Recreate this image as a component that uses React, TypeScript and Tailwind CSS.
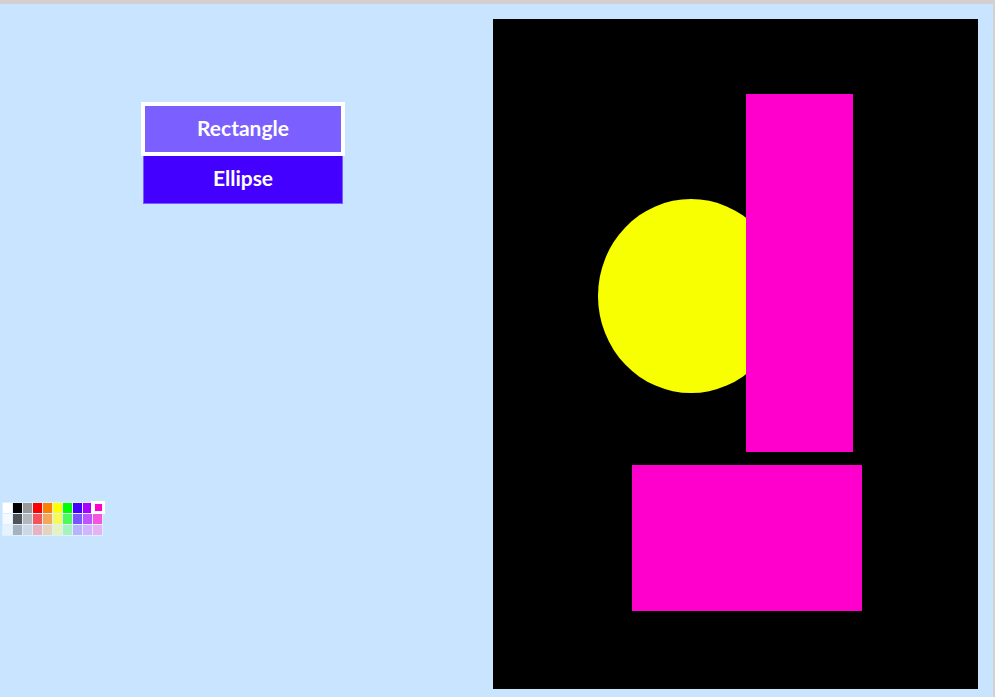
import React from 'react';

// palette swatches, row one is the full colour, lower rows are fainter tints
const swatches = [
  'bg-[#ffffff]',
  'bg-[#000000]',
  'bg-[#999999]',
  'bg-[#ff0000]',
  'bg-[#ff7f00]',
  'bg-[#ffff00]',
  'bg-[#00ff00]',
  'bg-[#4400ff]',
  'bg-[#aa00ff]',
  'bg-[#ff00cc]',
];

const rowFade = ['opacity-100', 'opacity-[0.65]', 'opacity-[0.25]'];

const Palette: React.FC = () => {
  return (
    <div className="grid grid-cols-[repeat(10,9px)] gap-[1px] p-[1px] bg-white/40 w-fit">
      {rowFade.map((fade, r) =>
        swatches.map((sw, c) => {
          const selected = r === 0 && c === swatches.length - 1;
          return (
            <div key={`${r}-${c}`} className="relative w-[9px] h-[10px]">
              <div className={`w-full h-full ${sw} ${fade}`} />
              {selected && (
                <div className="absolute -left-[2px] -top-[2px] w-[14px] h-[13px] bg-white flex items-center justify-center">
                  <div className="w-[7px] h-[7px] bg-[#ff00cc]" />
                </div>
              )}
            </div>
          );
        })
      )}
    </div>
  );
};

const ToolButton: React.FC<{ label: string; active?: boolean }> = ({ label, active }) => (
  <button
    className={
      active
        ? 'h-[50px] w-[200px] pb-[3px] bg-[#7b5fff] border-2 border-white outline-2 outline-white text-white font-bold text-[21px] font-[Lato,sans-serif] relative z-10'
        : 'h-[50px] w-[200px] pb-[3px] bg-[#4400ff] border border-[#7a5cff] text-white font-bold text-[21px] font-[Lato,sans-serif]'
    }
  >
    {label}
  </button>
);

export default function App() {
  return (
    <div className="h-[697px] bg-[#d4d0d0] pt-1 pr-[2px] overflow-hidden">
      <div className="flex h-full bg-[#c8e4fe]">
        {/* tools + palette */}
        <div className="w-[493px] shrink-0 flex flex-col">
          <div className="ml-[143px] mt-[100px] flex flex-col">
            <ToolButton label="Rectangle" active />
            <ToolButton label="Ellipse" />
          </div>
          <div className="ml-[2px] mt-[298px]">
            <Palette />
          </div>
        </div>

        {/* drawing surface */}
        <div className="mt-[15px]">
          <svg width="485" height="670" viewBox="0 0 485 670" className="block bg-black">
            <ellipse cx="198" cy="277" rx="93" ry="97" fill="#f8ff00" />
            <rect x="253" y="75" width="107" height="358" fill="#ff00cc" />
            <rect x="139" y="446" width="230" height="146" fill="#ff00cc" />
          </svg>
        </div>
      </div>
    </div>
  );
}
